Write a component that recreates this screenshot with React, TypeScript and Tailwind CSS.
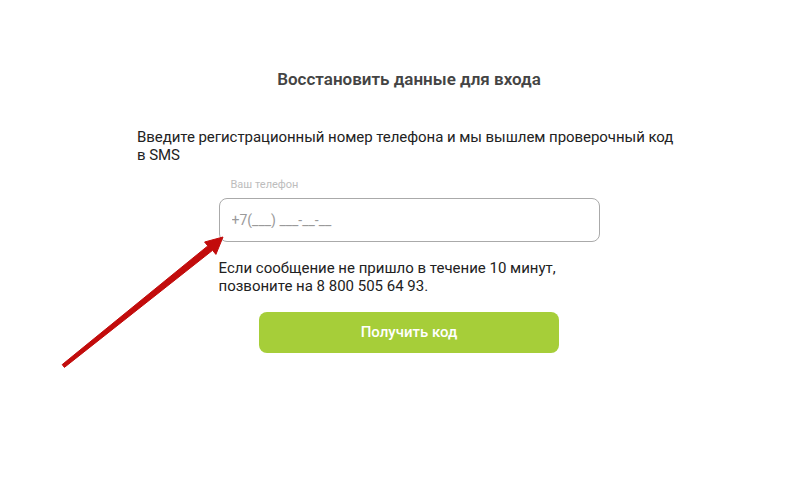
import React from "react"

// tail -> tip direction u = (0.778, -0.628), normal n = (0.628, 0.778)
function Arrow() {
  return (
    <svg
      className="pointer-events-none absolute left-0 top-0"
      width="800"
      height="488"
      viewBox="0 0 800 488"
    >
      <polygon
        points="62.2,364.6 207.8,245.9 204.6,242 223,237 215.9,254.4 212.6,250.3 64.4,367.4"
        fill="#c20c0c"
        stroke="#c20c0c"
        strokeWidth="1"
        strokeLinejoin="round"
      />
    </svg>
  )
}

export default function App() {
  return (
    <div className="relative min-h-[488px] bg-white font-['Roboto',sans-serif]">
      <div className="ml-[137px] w-[544px] pt-[67px]">
        <h1 className="text-center text-[17px] font-semibold leading-6 text-[#444]">
          Восстановить данные для входа
        </h1>

        <p className="mt-[37px] text-[15px] leading-[18px] tracking-[-0.05px] text-[#222]">
          Введите регистрационный номер телефона и мы вышлем проверочный код в SMS
        </p>

        <div className="mx-auto w-[381px]">
          <label className="mt-[14px] block pl-3 text-[11px] leading-[14px] text-[#bdbdbd]">
            Ваш телефон
          </label>
          <input
            type="text"
            placeholder="+7(___) ___-__-__"
            className="mt-[6px] block h-[44px] w-full rounded-lg border border-[#aaa] bg-white px-3 text-[14px] text-[#222] outline-none placeholder:text-[#9a9a9a]"
          />
          <p className="mt-[17px] text-[15px] leading-[18px] text-[#222]">
            Если сообщение не пришло в течение 10 минут,
            <br />
            позвоните на 8 800 505 64 93.
          </p>
        </div>

        <button className="mx-auto mt-[17px] block h-[41px] w-[300px] rounded-lg bg-[#a6ce39] text-[15px] font-medium text-white">
          Получить код
        </button>
      </div>

      <Arrow />
    </div>
  )
}
